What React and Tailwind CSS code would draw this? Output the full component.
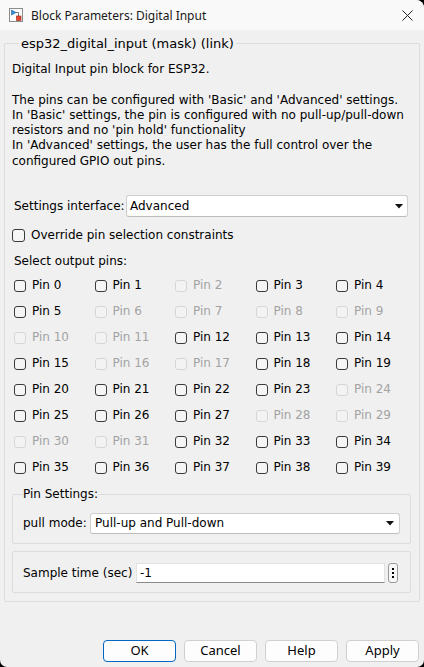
import React from "react";

const disabled = new Set([2, 6, 7, 8, 9, 10, 11, 16, 17, 24, 28, 29, 30, 31]);

function Box({ off, size = 12 }) {
  return (
    <span
      className={
        "inline-block shrink-0 rounded-[3px] border " +
        (off ? "border-[#d6d6d6] bg-[#f3f3f3]" : "border-[#3a3a3a] bg-[#f5f5f5]")
      }
      style={{ width: size, height: size }}
    />
  );
}

function Caret() {
  return (
    <svg width="8" height="5" viewBox="0 0 8 5" className="shrink-0">
      <path d="M0 0 H8 L4 4.5 Z" fill="#111" />
    </svg>
  );
}

function TitleIcon() {
  return (
    <svg width="14" height="14" viewBox="0 0 14 14" className="shrink-0">
      <rect x="0.5" y="0.5" width="13" height="13" fill="#fbfbfb" stroke="#8c8c8c" />
      <path d="M2.5 2 L7 4.5 L2.5 7 Z" fill="#2f8fd8" stroke="#1f5f9a" strokeWidth="0.6" />
      <path d="M7 4.5 H9.5 V8" fill="none" stroke="#555" strokeWidth="0.8" />
      <rect x="7.5" y="8" width="4.5" height="4.5" fill="#e8472f" stroke="#8a2a1a" strokeWidth="0.6" />
    </svg>
  );
}

export default function App() {
  const rows = [];
  for (let r = 0; r < 8; r++) {
    const row = [];
    for (let c = 0; c < 5; c++) row.push(r * 5 + c);
    rows.push(row);
  }
  const body = { fontFamily: '"DejaVu Sans", Verdana, sans-serif' };
  return (
    <div className="w-[424px] h-[667px] bg-black overflow-hidden">
      <div
        className="w-[424px] h-[667px] bg-[#f0f0f0] rounded-tr-[8px] rounded-b-[7px] overflow-hidden flex flex-col text-[#000]"
        style={body}
      >
        {/* Title bar */}
        <div className="h-[30px] bg-[#f9f9f9] flex items-center pl-[9px] pr-[11px] shrink-0">
          <TitleIcon />
          <span
            className="ml-[8px] text-[12px] leading-[16px] text-[#1a1a1a] mt-[1px]"
            style={{ fontFamily: '"Noto Sans", "Open Sans", sans-serif' }}
          >
            Block Parameters: Digital Input
          </span>
          <span className="flex-1" />
          <svg width="11" height="11" viewBox="0 0 11 11" className="mt-[1px]">
            <path d="M0.5 0.5 L10.5 10.5 M10.5 0.5 L0.5 10.5" stroke="#222" strokeWidth="1" />
          </svg>
        </div>

        {/* Outer group */}
        <fieldset className="min-w-0 mx-[4px] mt-[6px] border border-[#dcdcdc] rounded-[2px] pl-[7px] pr-[8px] pb-[8px] text-[12px] leading-[15px]">
          <legend className="ml-[7px] px-[2px] text-[13px] leading-[15px]">
            esp32_digital_input (mask) (link)
          </legend>

          <div className="pt-[11px] leading-[15.3px] whitespace-nowrap text-[12px]">
            <div>Digital Input pin block for ESP32.</div>
            <div>&nbsp;</div>
            <div>The pins can be configured with 'Basic' and 'Advanced' settings.</div>
            <div>In 'Basic' settings, the pin is configured with no pull-up/pull-down</div>
            <div>resistors and no 'pin hold' functionality</div>
            <div>In 'Advanced' settings, the user has the full control over the</div>
            <div>configured GPIO out pins.</div>
          </div>

          <div className="mt-[26px] flex items-center pl-[2px] pr-[3px]">
            <span className="w-[112px] shrink-0 whitespace-nowrap text-[12px]">Settings interface:</span>
            <div className="flex-1 h-[22px] bg-white border border-[#cfcfcf] border-b-[#bdbdbd] rounded-[3px] flex items-center pl-[3px] pr-[4px]">
              <span className="flex-1">Advanced</span>
              <Caret />
            </div>
          </div>

          <div className="mt-[11px] flex items-center gap-[6px]">
            <Box size={13} />
            <span>Override pin selection constraints</span>
          </div>

          <div className="mt-[11px] pl-[2px]">Select output pins:</div>

          <div className="mt-[9px] pl-[2px] flex flex-col gap-[11px]">
            {rows.map((row, i) => (
              <div key={i} className="grid grid-cols-[80.5px_80.5px_80.5px_80.5px_auto]">
                {row.map((p) => {
                  const off = disabled.has(p);
                  return (
                    <div key={p} className="flex items-center gap-[6px] h-[15px] whitespace-nowrap">
                      <Box off={off} />
                      <span className={off ? "text-[#a3a3a3]" : "text-black"}>Pin {p}</span>
                    </div>
                  );
                })}
              </div>
            ))}
          </div>

          {/* Pin settings group */}
          <fieldset className="min-w-0 mt-[12px] border border-[#dcdcdc] rounded-[2px] px-[10px] pb-[9px]">
            <legend className="px-0 leading-[15px]">Pin Settings:</legend>
            <div className="mt-[11px] flex items-center">
              <span className="w-[67px] shrink-0 whitespace-nowrap">pull mode:</span>
              <div className="flex-1 h-[21px] bg-white border border-[#cfcfcf] border-b-[#bdbdbd] rounded-[3px] flex items-center pl-[4px] pr-[5px]">
                <span className="flex-1">Pull-up and Pull-down</span>
                <Caret />
              </div>
            </div>
          </fieldset>

          {/* Sample time group */}
          <div className="mt-[7px] border border-[#dcdcdc] rounded-[2px] pl-[10px] pr-[12px] pt-[11px] pb-[9px]">
            <div className="flex items-center">
              <span className="w-[113px] shrink-0 whitespace-nowrap">Sample time (sec)</span>
              <div className="flex-1 h-[20px] bg-white border border-[#e2e2e2] border-b-[#8a8a8a] flex items-center pl-[3px]">
                -1
              </div>
              <div className="ml-[3px] w-[10px] h-[20px] rounded-[3px] border border-[#9a9a9a] bg-[#f7f7f7] flex flex-col items-center justify-center gap-[2px]">
                <span className="w-[2px] h-[2px] bg-black" />
                <span className="w-[2px] h-[2px] bg-black" />
                <span className="w-[2px] h-[2px] bg-black" />
              </div>
            </div>
          </div>
        </fieldset>

        {/* Buttons */}
        <div
          className="mt-[38px] flex justify-end gap-[8px] pr-[5px] text-[13px]"
          style={{ fontFamily: '"Noto Sans", "Open Sans", sans-serif' }}
        >
          <div className="w-[73px] h-[22px] rounded-[4px] border border-[#0067c0] bg-[#fdfdfd] flex items-center justify-center">OK</div>
          <div className="w-[73px] h-[22px] rounded-[4px] border border-[#d0d0d0] bg-[#fdfdfd] flex items-center justify-center">Cancel</div>
          <div className="w-[73px] h-[22px] rounded-[4px] border border-[#d0d0d0] bg-[#fdfdfd] flex items-center justify-center">Help</div>
          <div className="w-[73px] h-[22px] rounded-[4px] border border-[#d0d0d0] bg-[#fdfdfd] flex items-center justify-center">Apply</div>
        </div>
      </div>
    </div>
  );
}
